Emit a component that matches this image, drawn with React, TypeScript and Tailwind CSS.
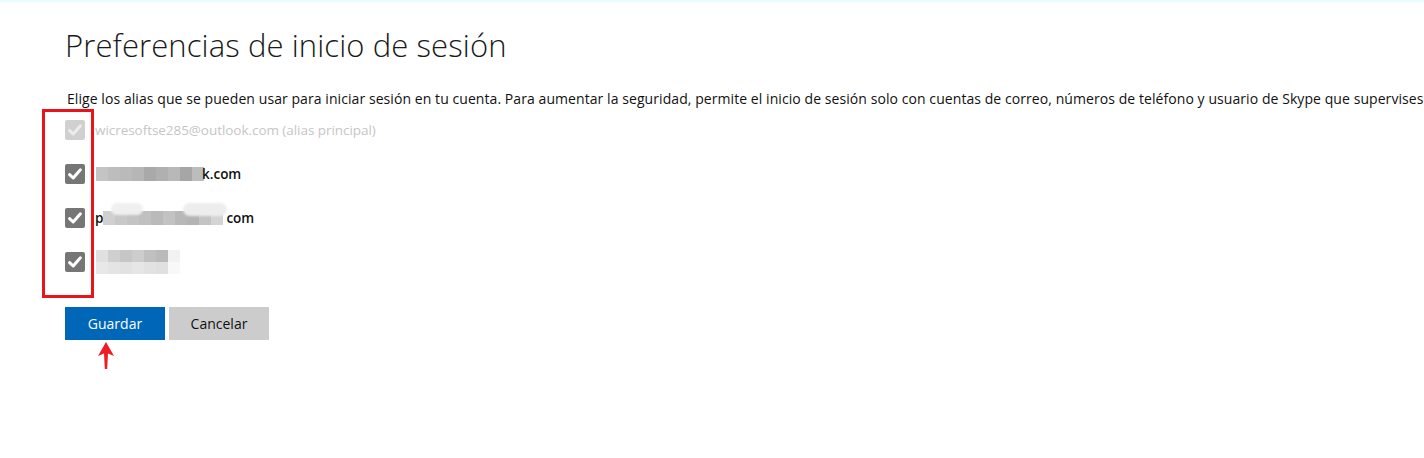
import React from "react";

const font = { fontFamily: '"Open Sans", "Noto Sans", Arial, sans-serif' };

function Check({ disabled }: { disabled?: boolean }) {
  return (
    <div
      className={`w-[20px] h-[20px] rounded-[2px] flex items-center justify-center shrink-0 ${
        disabled ? "bg-[#d0d0d0]" : "bg-[#767676]"
      }`}
    >
      <svg width="16" height="16" viewBox="0 0 16 16">
        <path
          d="M2.6 8.6 L6.2 12 L13.4 3.8"
          fill="none"
          stroke={disabled ? "#ececec" : "#ffffff"}
          strokeWidth="3"
          strokeLinecap="round"
          strokeLinejoin="round"
        />
      </svg>
    </div>
  );
}

function Blocks({ colors, w, h }: { colors: string[]; w: number; h: number }) {
  return (
    <div className="flex">
      {colors.map((c, i) => (
        <div key={i} style={{ width: w, height: h, background: c }} />
      ))}
    </div>
  );
}

export default function App() {
  return (
    <div className="relative w-[1424px] h-[458px] bg-white overflow-hidden" style={font}>
      <div className="h-[2px] bg-[#e8fbfd]" />
      <div className="pl-[65px] pt-[23px]">
        <h1 className="text-[31px] leading-[40px] font-light text-[#1a1a1a] tracking-[0.1px]">
          Preferencias de inicio de sesión
        </h1>
        <p className="mt-[24px] text-[14px] leading-[20px] text-[#111] whitespace-nowrap pl-[2px] tracking-[0.07px]">
          Elige los alias que se pueden usar para iniciar sesión en tu cuenta. Para aumentar la seguridad, permite el inicio de sesión solo con cuentas de correo, números de teléfono y usuario de Skype que supervises
        </p>
        <div className="mt-[11px] flex flex-col gap-[24px]">
          <div className="flex items-center gap-[10px] h-[20px]">
            <Check disabled />
            <span className="text-[13.5px] text-[#c6c6c6] tracking-[-0.05px]">
              wicresoftse285@outlook.com (alias principal)
            </span>
          </div>
          <div className="flex items-center h-[20px]">
            <Check />
            <div className="ml-[11px] flex items-center">
              <Blocks
                w={12}
                h={14}
                colors={["#c4c4c4", "#bdbdbd", "#bababa", "#b6b6b6", "#a9a9a9", "#b0b0b0", "#b8b8b8", "#a6a6a6", "#bcbcbc"]}
              />
              <span className="text-[13.5px] font-semibold text-[#111] -ml-[2px]">k.com</span>
            </div>
          </div>
          <div className="flex items-center h-[20px]">
            <Check />
            <div className="ml-[10px] flex items-center relative">
              <span className="text-[13.5px] font-semibold text-[#111]">p</span>
              <div className="relative">
                <div className="absolute -top-[8px] left-[8px] w-[32px] h-[12px] rounded-full bg-[#f0f0f0] blur-[1px]" />
                <div className="absolute -top-[8px] left-[80px] w-[44px] h-[13px] rounded-full bg-[#ededed] blur-[1px]" />
                <Blocks
                  w={12}
                  h={14}
                  colors={["#d0d0d0", "#c8c8c8", "#c4c4c4", "#c0c0c0", "#bababa", "#c2c2c2", "#b8b8b8", "#b4b4b4", "#c4c4c4", "#d4d4d4"]}
                />
              </div>
              <span className="text-[13.5px] font-semibold text-[#111] ml-[3px]">com</span>
            </div>
          </div>
          <div className="flex items-center h-[20px]">
            <Check />
            <div className="ml-[11px] flex flex-col">
              <Blocks
                w={12}
                h={12}
                colors={["#e0e0e0", "#cfcfcf", "#c6c6c6", "#cdcdcd", "#c0c0c0", "#bababa", "#f2f2f2"]}
              />
              <Blocks
                w={12}
                h={12}
                colors={["#e8e8e8", "#e4e4e4", "#e2e2e2", "#e6e6e6", "#e2e2e2", "#e0e0e0", "#f8f8f8"]}
              />
            </div>
          </div>
        </div>
        <div className="mt-[35px] flex gap-[4px]">
          <button className="w-[100px] h-[33px] bg-[#0067b8] text-white text-[14px]">Guardar</button>
          <button className="w-[100px] h-[33px] bg-[#cccccc] text-[#111] text-[14px]">Cancelar</button>
        </div>
      </div>

      <div className="absolute left-[42px] top-[109px] w-[52px] h-[189px] border-[3px] border-[#e8141b]" />
      <svg className="absolute left-[97px] top-[342px]" width="18" height="28" viewBox="0 0 18 28">
        <path d="M9 0 L17 14 L11 11.5 L10.2 27 L7.8 27 L7 11.5 L1 14 Z" fill="#ee1c24" />
      </svg>
    </div>
  );
}
